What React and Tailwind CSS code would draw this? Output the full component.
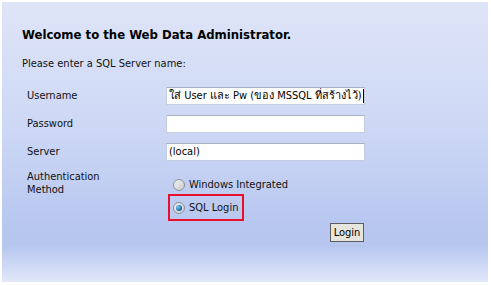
import React from "react";

const font = { fontFamily: "'DejaVu Sans Condensed', 'DejaVu Sans', sans-serif", fontStretch: "semi-condensed" };

function Row({ label, children }) {
  return (
    <div className="flex h-[28px] items-center">
      <span className="w-[139px] text-[11px] text-[#111]">{label}</span>
      {children}
    </div>
  );
}

function TextBox({ children }) {
  return (
    <div className="flex h-[18px] w-[199px] items-center overflow-hidden whitespace-nowrap border border-[#c6cde0] border-t-[#a9b0c4] bg-white px-[2px] text-[11px] text-black">
      {children}
    </div>
  );
}

function Radio({ checked, label }) {
  return (
    <div className="flex h-[14px] items-center gap-[4px]">
      <span className="flex h-[12px] w-[12px] items-center justify-center rounded-full border border-[#8a8f99] bg-gradient-to-br from-[#f4f4f4] to-[#c9c9c9]">
        {checked && <span className="h-[6px] w-[6px] rounded-full bg-[radial-gradient(circle_at_35%_35%,#7fd0f5,#1b6fa8_60%,#0b3d66)]" />}
      </span>
      <span className="text-[11px] leading-[14px] text-[#111]">{label}</span>
    </div>
  );
}

export default function App() {
  return (
    <div className="h-[285px] w-[491px] bg-white pb-[3px] pl-[2px] pr-[3px] pt-[2px]" style={font}>
      <div className="h-full bg-[linear-gradient(to_bottom,#dfe5f8_0%,#cdd8f5_45%,#b8c7f0_80%,#b6c6ef_87%,#e2e8fa_100%)] pl-[20px] pt-[23px]">
        <h1 className="text-[13px] font-bold text-black">Welcome to the Web Data Administrator.</h1>
        <p className="mt-[11px] text-[11px] text-[#111]">Please enter a SQL Server name:</p>

        <div className="mt-[10px] pl-[5px]">
          <Row label="Username">
            <TextBox>
              <span>ใส่ User และ Pw (ของ MSSQL ที่สร้างไว้)</span>
              <span className="ml-[1px] h-[14px] w-px shrink-0 bg-black" />
            </TextBox>
          </Row>
          <Row label="Password">
            <TextBox />
          </Row>
          <Row label="Server">
            <TextBox>(local)</TextBox>
          </Row>

          <div className="flex">
            <span className="w-[139px] pt-[4px] text-[11px] leading-[13px] text-[#111]">
              Authentication
              <br />
              Method
            </span>
            <div className="flex flex-col pt-[12px]">
              <div className="pl-[7px]">
                <Radio label="Windows Integrated" />
              </div>
              <div className="ml-[2px] mt-[2px] flex w-fit border-2 border-[#e8102a] pb-[4px] pl-[3px] pr-[4px] pt-[5px]">
                <Radio checked label="SQL Login" />
              </div>
            </div>
          </div>

          <div className="flex w-[337px] justify-end pt-[2px]">
            <button className="h-[19px] w-[34px] border border-[#5e5e5e] bg-[#e6e6df] p-0 text-[11px] leading-none text-black">
              Login
            </button>
          </div>
        </div>
      </div>
    </div>
  );
}
